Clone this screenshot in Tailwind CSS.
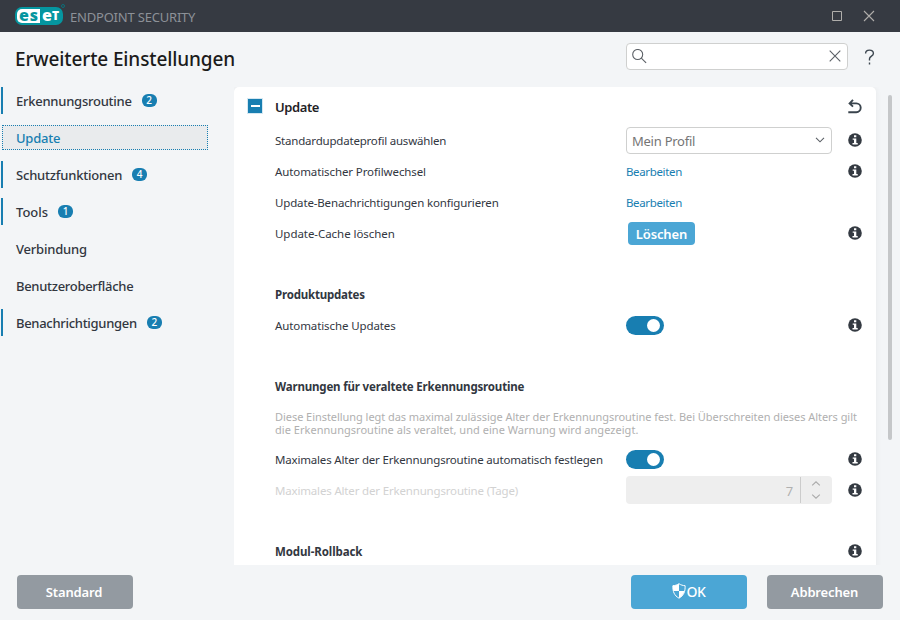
<!DOCTYPE html>
<html lang="de">
<head>
<meta charset="utf-8">
<title>ESET Endpoint Security</title>
<script src="https://cdn.jsdelivr.net/npm/@tailwindcss/browser@4"></script>
</head>
<body class="w-[900px] h-[620px] overflow-hidden bg-[#f3f5f7] font-['Noto_Sans','Open_Sans',sans-serif] text-[#32373f] flex flex-col">
<svg class="hidden">
  <symbol id="info" viewBox="0 0 14 14"><circle cx="7" cy="7" r="6.8" fill="#343a42"/><path d="M6 2.2h2.300v2.100H6zM4.700 5.400h3.600v4.700h1.400v1.400H4.500v-1.400H6V6.800H4.700z" fill="#fff"/></symbol>
</svg>

<header class="h-8 shrink-0 bg-[#363a42] flex items-center pl-[15px] pr-[25px]">
  <div class="relative flex h-[18px] w-[48px] rounded-[7px] bg-[#0596a0] p-[2px] font-['Open_Sans',sans-serif] font-extrabold text-[16px] leading-[12px]">
    <span class="w-[23px] h-[14px] rounded-l-[5px] bg-white text-[#0596a0] text-center tracking-[0.8px] pl-[1px]">es</span>
    <span class="w-[21px] h-[14px] text-white flex justify-center"><span>e</span><span class="text-[12px] leading-[13px]">T</span></span>
    <span class="absolute -top-[3px] -right-[2px] w-[4px] h-[4px] rounded-full border border-[#0d6f79]"></span>
  </div>
  <span class="ml-[7px] text-[13px] leading-[18px] tracking-[-0.2px] text-[#8d9198] whitespace-nowrap relative top-[1px]">ENDPOINT SECURITY</span>
  <div class="ml-auto flex items-center gap-[20px] text-[#b0aeab]">
    <svg width="12" height="12" viewBox="0 0 12 12" fill="none" stroke="currentColor"><path d="M1.5 1.500h9v9h-9z"/></svg>
    <svg width="12" height="12" viewBox="0 0 12 12" fill="none" stroke="currentColor" stroke-width="1.1"><path d="M1 1l10 10M11 1L1 11"/></svg>
  </div>
</header>

<div class="h-[55px] shrink-0 flex pl-[15px] pr-[24px]">
  <h1 class="mt-[13px] text-[19px] leading-[28px] font-medium tracking-[-0.13px] text-[#1b1b1b] whitespace-nowrap">Erweiterte Einstellungen</h1>
  <div class="ml-auto mt-[11px] w-[222px] h-[27px] rounded-[4px] border border-[#cfd0cf] bg-white flex items-center justify-between pl-[5px] pr-[6px] text-[#5b6066]">
    <svg width="15" height="15" viewBox="0 0 15 15" fill="none" stroke="currentColor" stroke-width="1.1"><circle cx="5.7" cy="5.500" r="5"/><path d="M9.300 9.200l4.800 4.700"/></svg>
    <svg class="-mt-[1px]" width="12" height="12" viewBox="0 0 12 12" fill="none" stroke="currentColor" stroke-width="1.1"><path d="M.7.7l10.6 10.6M11.3.7L.7 11.3"/></svg>
  </div>
  <svg class="ml-[16px] mt-[17px]" width="12" height="17" viewBox="0 0 12 17" fill="none" stroke="#3d4750" stroke-width="1.4"><path d="M1.6 4.4C1.6 2.3 3 1.1 5.4 1.1S9.4 2.4 9.4 4.4C9.4 7 5.5 7.2 5.5 9.8v1.7M5.5 13.6v1.9"/></svg>
</div>

<main class="h-[478px] shrink-0 flex">
  <nav class="w-[234px] flex flex-col gap-[10px] pl-[1px] text-[13px] font-medium leading-[18px] tracking-[-0.25px] whitespace-nowrap">
    <div class="h-[27px] flex items-center border-l-2 border-[#187eb1] pl-[13px]">Erkennungsroutine<span class="ml-[10px] w-[15px] h-[13px] rounded-[6px] bg-[#187eb1] text-white text-[10px] leading-[13px] text-center tracking-normal">2</span></div>
    <div class="h-[27px] flex items-start pt-px pl-[1px]"><div class="w-[206px] h-[25px] border border-dotted border-[#187eb1] bg-[#e9ebed] flex items-center pl-[13px] text-[#187eb1]">Update</div></div>
    <div class="h-[27px] flex items-center border-l-2 border-[#187eb1] pl-[13px] tracking-[-0.2px]">Schutzfunktionen<span class="ml-[10px] w-[15px] h-[13px] rounded-[6px] bg-[#187eb1] text-white text-[10px] leading-[13px] text-center tracking-normal">4</span></div>
    <div class="h-[27px] flex items-center border-l-2 border-[#187eb1] pl-[13px] tracking-[0px]">Tools<span class="ml-[10px] w-[15px] h-[13px] rounded-[6px] bg-[#187eb1] text-white text-[10px] leading-[13px] text-center tracking-normal">1</span></div>
    <div class="h-[27px] flex items-center pl-[15px] tracking-[-0.2px]">Verbindung</div>
    <div class="h-[27px] flex items-center pl-[15px] tracking-[-0.3px]">Benutzeroberfläche</div>
    <div class="h-[27px] flex items-center border-l-2 border-[#187eb1] pl-[13px] tracking-[-0.3px]">Benachrichtigungen<span class="ml-[10px] w-[15px] h-[13px] rounded-[6px] bg-[#187eb1] text-white text-[10px] leading-[13px] text-center tracking-normal">2</span></div>
  </nav>

  <div class="w-[652px] h-[478px] overflow-hidden">
    <section class="w-[642px] h-[500px] rounded-t-[5px] bg-white shadow-[0_0_6px_rgba(0,0,0,0.06)] pl-[41px] pr-[14px] text-[11.5px] leading-[16px] tracking-[-0.15px] whitespace-nowrap">
      <div class="h-[38px] flex items-center -ml-[28px]">
        <span class="w-[16px] h-[16px] -mt-px bg-[#187eb1] border border-[#d5e8f2] flex items-center justify-center"><span class="w-[9px] h-[2px] bg-white"></span></span>
        <h2 class="ml-[12px] mt-[2px] text-[13px] font-semibold text-[#1f2226] tracking-[-0.4px]">Update</h2>
        <svg class="ml-auto" width="14" height="15" viewBox="0 0 14 15" fill="none" stroke="#3a444d" stroke-width="1.9"><path d="M.3 13.200h8a4.400 4.400 0 0 0 0-8.800H2M5 .8L1.600 4.400 5 7.600"/></svg>
      </div>
      <div class="h-[31px] flex items-center"><span class="w-[351px] tracking-[-0.2px]">Standardupdateprofil auswählen</span>
        <div class="w-[206px] h-[27px] rounded-[4px] border border-[#cfd0cf] flex items-center justify-between pl-[5px] pr-[6px] text-[13px] text-[#757575] tracking-[-0.25px]"><span>Mein Profil</span><svg class="-mt-[2px]" width="10" height="6" viewBox="0 0 10 6" fill="none" stroke="#5b6066" stroke-width="1.1"><path d="M1 .8l4 4 4-4"/></svg></div>
        <svg class="ml-auto -mt-[2px]" width="14" height="14"><use href="#info"/></svg></div>
      <div class="h-[31px] flex items-center"><span class="w-[351px] tracking-[-0.1px]">Automatischer Profilwechsel</span><span class="text-[#187eb1] tracking-[-0.35px]">Bearbeiten</span><svg class="ml-auto -mt-[2px]" width="14" height="14"><use href="#info"/></svg></div>
      <div class="h-[31px] flex items-center"><span class="w-[351px]">Update-Benachrichtigungen konfigurieren</span><span class="text-[#187eb1] tracking-[-0.35px]">Bearbeiten</span></div>
      <div class="h-[31px] flex items-center"><span class="w-[353px] tracking-[-0.05px]">Update-Cache löschen</span><span class="w-[67px] h-[23px] rounded-[4px] bg-[#4ba6d5] text-white text-[13px] leading-[24px] font-semibold tracking-[-0.1px] text-center">Löschen</span><svg class="ml-auto -mt-[2px]" width="14" height="14"><use href="#info"/></svg></div>

      <h3 class="mt-[30px] h-[31px] flex items-center font-bold tracking-[-0.2px]">Produktupdates</h3>
      <div class="h-[31px] flex items-center"><span class="w-[351px] tracking-[-0.1px]">Automatische Updates</span><span class="w-[38px] h-[19px] rounded-full bg-[#187eb1] flex items-center justify-end pr-[4px]"><span class="w-[13px] h-[13px] rounded-full bg-white"></span></span><svg class="ml-auto -mt-[2px]" width="14" height="14"><use href="#info"/></svg></div>

      <h3 class="mt-[30px] h-[31px] flex items-center font-bold tracking-[-0.17px]">Warnungen für veraltete Erkennungsroutine</h3>
      <div class="h-[42px] pt-[8px] text-[11px] leading-[13px] tracking-[-0.05px] text-[#b0b0b0]"><p>Diese Einstellung legt das maximal zulässige Alter der Erkennungsroutine fest. Bei Überschreiten dieses Alters gilt</p><p class="tracking-[0.03px]">die Erkennungsroutine als veraltet, und eine Warnung wird angezeigt.</p></div>
      <div class="h-[31px] flex items-center"><span class="w-[351px] tracking-[-0.18px]">Maximales Alter der Erkennungsroutine automatisch festlegen</span><span class="w-[38px] h-[19px] rounded-full bg-[#187eb1] flex items-center justify-end pr-[4px]"><span class="w-[13px] h-[13px] rounded-full bg-white"></span></span><svg class="ml-auto -mt-[2px]" width="14" height="14"><use href="#info"/></svg></div>
      <div class="h-[31px] flex items-center"><span class="w-[351px] text-[#d2d2d2] tracking-[-0.17px]">Maximales Alter der Erkennungsroutine (Tage)</span>
        <div class="w-[206px] h-[28px] -mt-[2px] rounded-[4px] bg-[#eeeeee] flex items-center justify-end"><span class="text-[13px] text-[#b0b0b0] mr-[7px] mt-[2px]">7</span><div class="w-[32px] h-[26px] border-l border-[#cccccc] flex flex-col items-center justify-center gap-[8px] pr-[1px]"><svg width="10" height="5" viewBox="0 0 10 5" fill="none" stroke="#aaa" stroke-width="1.1"><path d="M1.2 4.4L5 .8l3.8 3.6"/></svg><svg width="10" height="5" viewBox="0 0 10 5" fill="none" stroke="#aaa" stroke-width="1.1"><path d="M1.2.6L5 4.2 8.8.6"/></svg></div></div>
        <svg class="ml-auto -mt-[2px]" width="14" height="14"><use href="#info"/></svg></div>

      <h3 class="mt-[30px] h-[31px] flex items-center font-bold tracking-[-0.1px]">Modul-Rollback<svg class="ml-auto -mt-[2px]" width="14" height="14"><use href="#info"/></svg></h3>
    </section>
  </div>
  <div class="w-[4px] h-[345px] mt-[8px] ml-[2px] rounded-full bg-[#c5c7c9]"></div>
</main>

<footer class="h-[55px] shrink-0 flex pt-[10px] pl-[17px] pr-[17px] text-[13px] leading-[34px] font-semibold tracking-[-0.15px] text-white text-center">
  <div class="w-[116px] h-[34px] rounded-[4px] bg-[#939aa1] pr-[2px]">Standard</div>
  <div class="ml-auto w-[116px] h-[34px] rounded-[4px] bg-[#4ba6d5] flex items-center justify-center gap-[1px] pr-[1px]">
    <svg class="-mt-[2px]" width="14" height="16" viewBox="0 0 14 16"><path d="M7 .7C5.2 2 3 2.6.9 2.7.6 8.5 2.3 12.6 7 15.2c4.7-2.6 6.4-6.7 6.1-12.5C11 2.6 8.800 2 7 .7z" fill="#4ba6d5" stroke="#fff"/><path d="M7 .7C5.200 2 3 2.600.9 2.700.8 4.900 1 6.500 1.500 8H7zM7 8h5.500c-.8 3-2.500 5.500-5.500 7.200z" fill="#fff"/></svg>
    <span class="text-[14px] font-medium tracking-[-0.5px]">OK</span>
  </div>
  <div class="ml-[20px] w-[116px] h-[34px] rounded-[4px] bg-[#939aa1] pr-[1px]">Abbrechen</div>
</footer>
</body>
</html>
